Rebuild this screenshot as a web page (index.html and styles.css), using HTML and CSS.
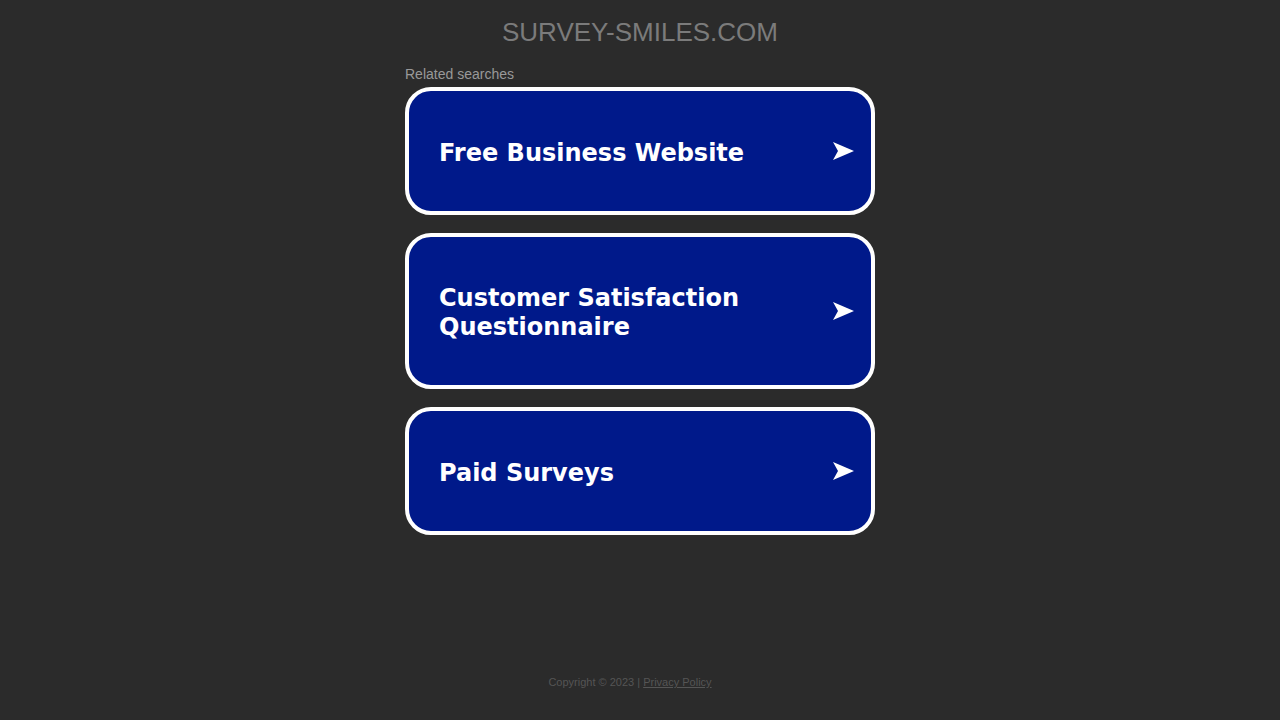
FILE: index.html
```html
<!DOCTYPE html>
<html lang="en">
<head>
<meta charset="utf-8">
<meta name="viewport" content="width=device-width, initial-scale=1">
<title>survey-smiles.com</title>
<link rel="stylesheet" href="styles.css">
</head>
<body>
<header class="header"><h1 class="domain">survey-smiles.com</h1></header>
<main class="searches">
  <h2 class="label">Related searches</h2>
  <a class="card" href="#"><span class="title">Free Business Website</span><svg class="arrow" viewBox="0 0 22 20" aria-hidden="true"><path d="M1 1L22 10L1 19L6 10Z"/></svg></a>
  <a class="card" href="#"><span class="title">Customer Satisfaction Questionnaire</span><svg class="arrow" viewBox="0 0 22 20" aria-hidden="true"><path d="M1 1L22 10L1 19L6 10Z"/></svg></a>
  <a class="card" href="#"><span class="title">Paid Surveys</span><svg class="arrow" viewBox="0 0 22 20" aria-hidden="true"><path d="M1 1L22 10L1 19L6 10Z"/></svg></a>
</main>
<footer class="footer">Copyright © 2023 | <a class="privacy" href="#">Privacy Policy</a></footer>
</body>
</html>
```
FILE: styles.css
```css
* { box-sizing: border-box; }
body {
  margin: 0;
  min-height: 100vh;
  display: flex;
  flex-direction: column;
  background: #2b2b2b;
  font-family: "Liberation Sans", Arial, sans-serif;
}
.header { padding: 17px 16px 0; text-align: center; }
.domain {
  margin: 0;
  font-size: 26px;
  line-height: 30px;
  font-weight: 400;
  text-transform: uppercase;
  color: #7b7b7b;
}
.searches {
  width: 100%;
  max-width: 470px;
  margin: 18px auto 0;
}
.label {
  margin: 0 0 4px;
  font-size: 14px;
  line-height: 18px;
  font-weight: 400;
  color: #999;
}
.card {
  display: flex;
  align-items: center;
  justify-content: space-between;
  gap: 60px;
  min-height: 128px;
  margin-bottom: 18px;
  padding: 43px 17px 43px 30px;
  border: 4px solid #fff;
  border-radius: 26px;
  background: #00198a;
  color: #fff;
  text-decoration: none;
}
.title {
  padding-top: 4px;
  font-family: "DejaVu Sans", Verdana, sans-serif;
  font-size: 24px;
  line-height: 29px;
  font-weight: 700;
}
.arrow { flex: none; width: 22px; height: 20px; fill: currentColor; }
.footer {
  margin-top: auto;
  padding: 0 20px 30px 0;
  font-size: 11px;
  line-height: 16px;
  text-align: center;
  color: #555;
}
.privacy { color: inherit; }
```
